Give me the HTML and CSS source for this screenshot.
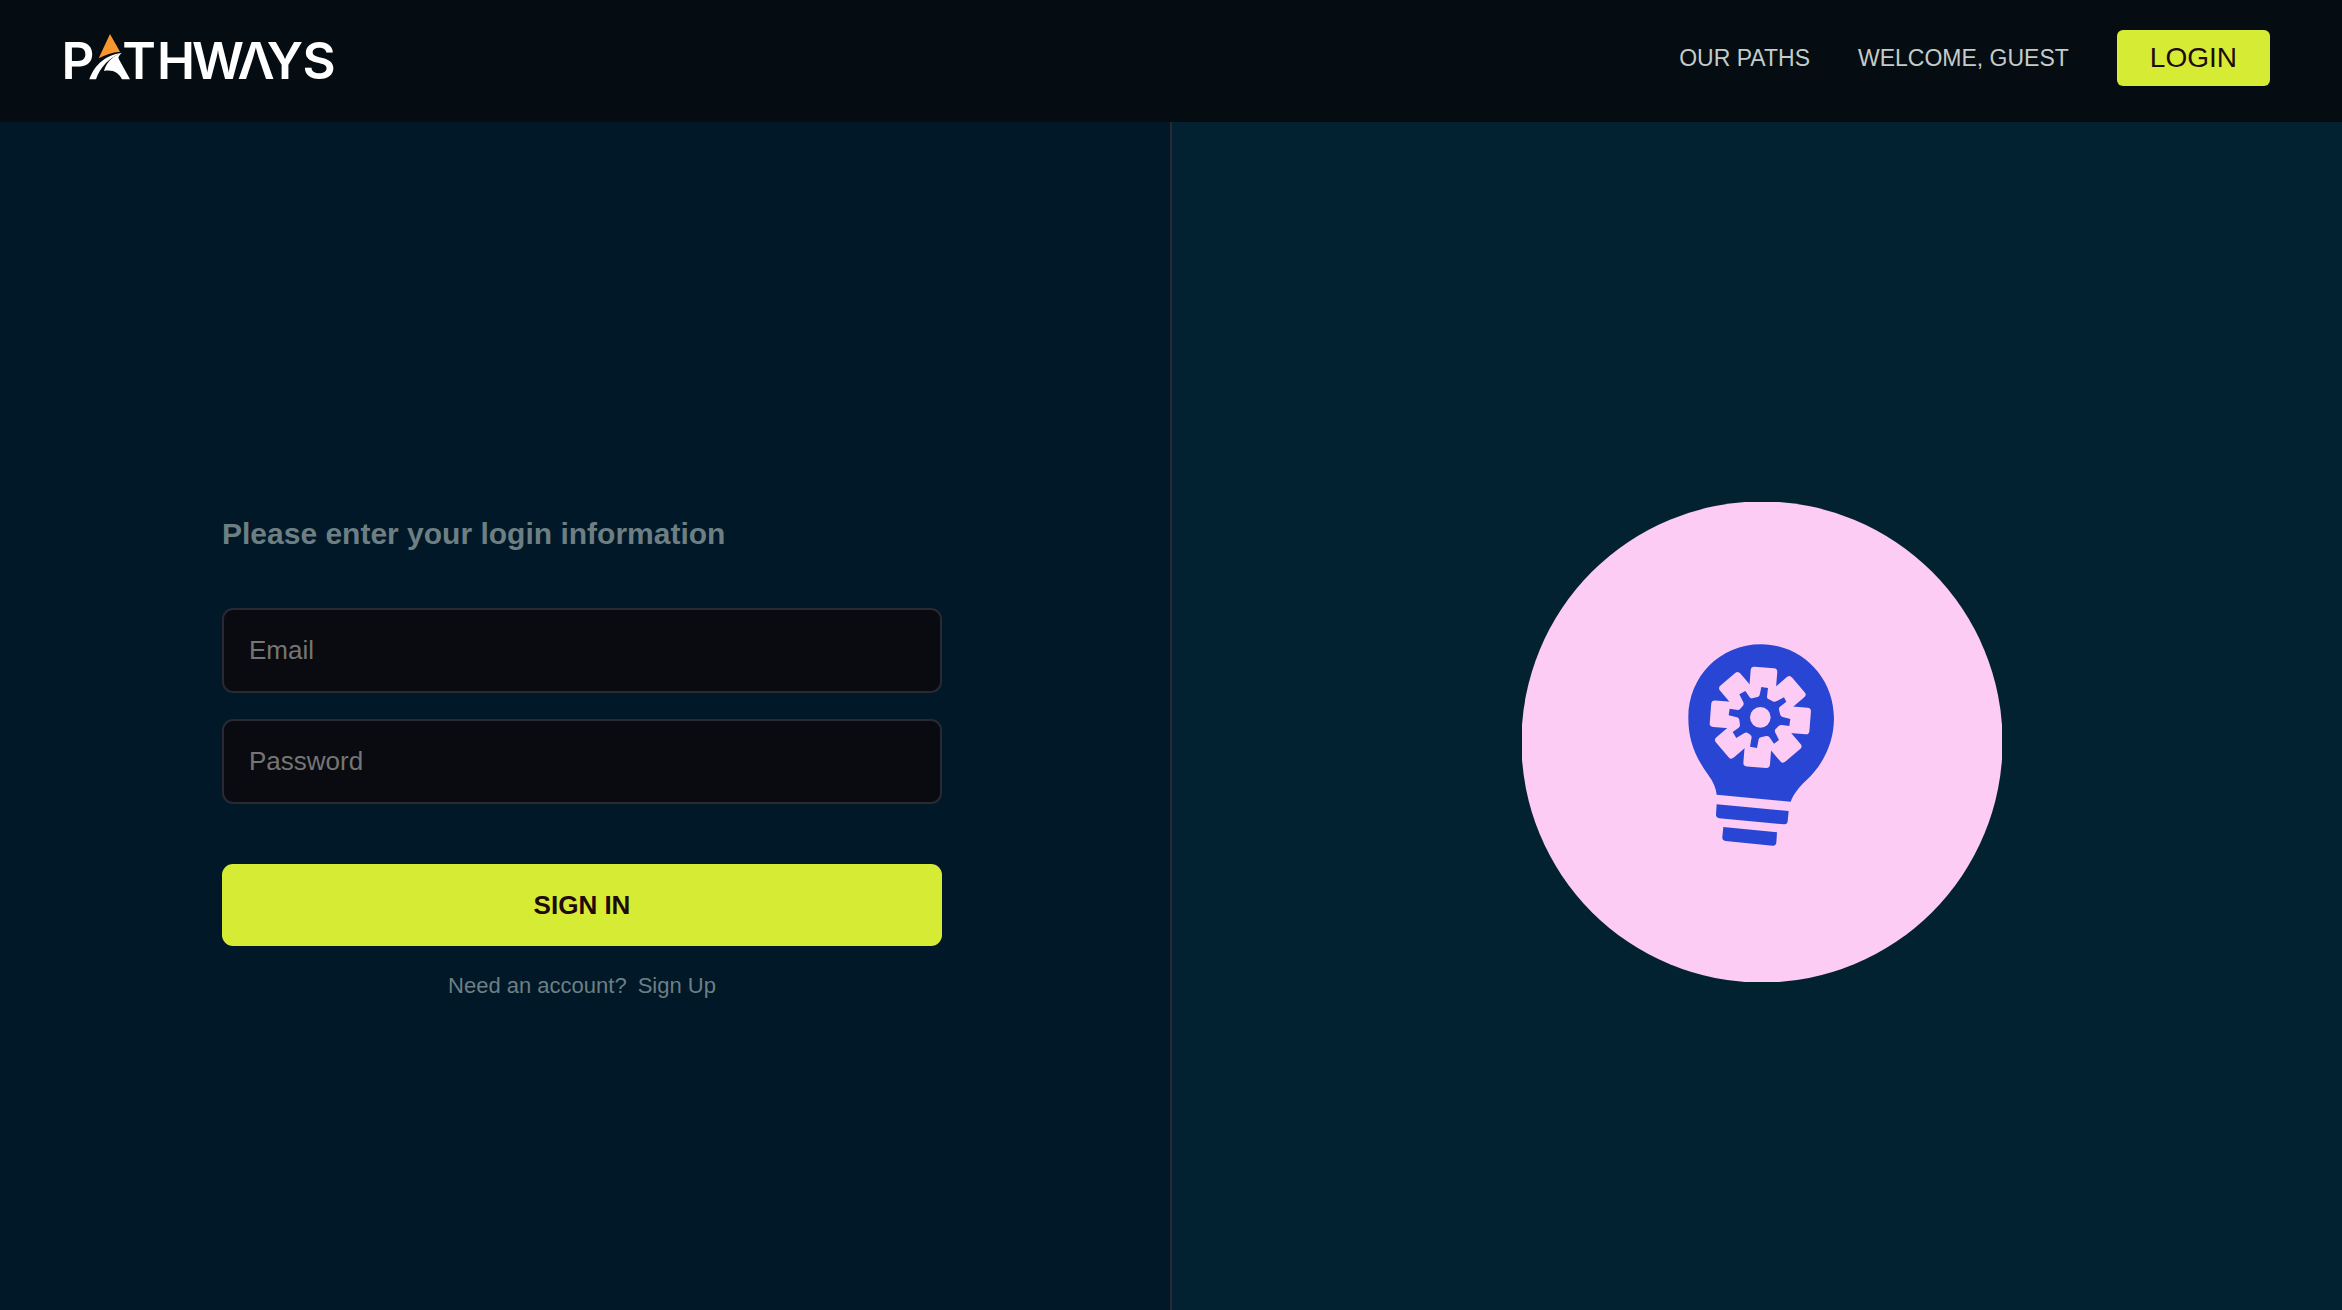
FILE: index.html
```html
<!DOCTYPE html>
<html lang="en">
<head>
<meta charset="utf-8">
<meta name="viewport" content="width=device-width, initial-scale=1">
<title>Pathways – Login</title>
<link rel="stylesheet" href="styles.css">
</head>
<body>
<header class="site-header">
  <a class="logo" href="#" aria-label="Pathways home">
    <svg class="logo-art" viewBox="0 0 280 50" aria-hidden="true">
      <g transform="translate(-12 -10) scale(.3333)">
        <path fill="#f7972f" d="M180 42 L210 95 Q175 98 146 115 Z"/>
        <path fill="#fff" d="M118 178 C132 140 158 108 215 98 C178 112 150 142 138 178 Z"/>
        <path fill="#fff" d="M162 153 C168 130 184 110 215 98 C207 106 204 112 206 116 L240 178 L216 178 C206 158 188 148 162 153 Z"/>
      </g>
      <g class="logo-text">
        <text x="16" y="49">P</text>
        <text x="77 114 156 194 223 257" y="49">THWΛYS</text>
      </g>
    </svg>
  </a>
  <nav class="site-nav">
    <a class="nav-link" href="#">OUR PATHS</a>
    <a class="nav-link" href="#">WELCOME, GUEST</a>
    <button class="login-button" type="button">LOGIN</button>
  </nav>
</header>
<main class="split">
  <section class="panel panel-form">
    <form class="login-form">
      <h1 class="form-title">Please enter your login information</h1>
      <div class="fields">
        <input class="field" type="email" placeholder="Email" aria-label="Email">
        <input class="field" type="password" placeholder="Password" aria-label="Password">
      </div>
      <button class="submit-button" type="submit">SIGN IN</button>
      <p class="signup-note"><span>Need an account?</span><a class="signup-link" href="#">Sign Up</a></p>
    </form>
  </section>
  <section class="panel panel-art">
    <svg class="idea-art" viewBox="0 0 480 480" role="img" aria-label="Light bulb with a gear">
      <circle cx="240" cy="240" r="240.6" fill="#fcccf4"/>
      <g transform="translate(138 118) scale(.3333)" fill="#2945d4">
        <path d="M303 73 C425 73 522 172 522 295 C522 370 488 435 440 480 C420 498 402 520 392 545 L170 524 C168 505 160 485 145 465 C105 410 85 360 85 293 C85 170 180 73 303 73Z"/>
        <path d="M170 553 L386 573 L383 604 Q382 614 372 613 L178 595 Q167 593 168 583Z"/>
        <path d="M190 621 L351 637 L349 668 Q347 678 338 677 L197 663 Q186 661 187 651Z"/>
        <g transform="translate(301 292) rotate(4.5)" fill="#fcccf4">
          <rect x="-40" y="-150" width="80" height="300" rx="11"/>
          <rect x="-40" y="-150" width="80" height="300" rx="11" transform="rotate(45)"/>
          <rect x="-40" y="-150" width="80" height="300" rx="11" transform="rotate(90)"/>
          <rect x="-40" y="-150" width="80" height="300" rx="11" transform="rotate(135)"/>
        </g>
        <path d="M304 201 L324 204 L321 230 Q321 235 325 237 L341 245 Q345 246 349 244 L372 232 L379 245 L360 260 Q356 264 357 269 L361 285 Q363 290 368 291 L391 297 L388 318 L366 315 Q360 314 356 318 L346 328 Q344 331 345 336 L357 360 L342 371 L328 351 Q324 347 319 348 L302 352 Q297 353 296 358 L291 384 L270 380 L275 352 Q275 347 271 344 L262 338 Q257 336 252 340 L229 354 L218 336 L236 323 Q240 320 240 316 L238 299 Q236 293 231 292 L206 286 L209 266 L233 270 Q238 270 241 266 L250 256 Q252 251 250 247 L238 223 L256 213 L269 232 Q272 236 277 235 L293 231 Q298 230 299 225Z"/>
        <circle cx="301" cy="292" r="31" fill="#fcccf4"/>
      </g>
    </svg>
  </section>
</main>
</body>
</html>
```
FILE: styles.css
```css
* {
  box-sizing: border-box;
}

body {
  margin: 0;
  min-height: 100vh;
  display: flex;
  flex-direction: column;
  background: #001828;
  font-family: "Liberation Sans", Arial, sans-serif;
}

.site-header {
  display: flex;
  justify-content: space-between;
  align-items: flex-start;
  padding: 30px 72px 36px 62px;
  background: #050c12;
}

.logo {
  display: block;
}

.logo-art {
  display: block;
  width: 280px;
  height: 50px;
  overflow: visible;
}

.logo-text {
  fill: #fff;
  font-family: Inter, sans-serif;
  font-size: 51px;
  font-weight: 600;
  text-anchor: middle;
}

.site-nav {
  display: flex;
  align-items: center;
  gap: 48px;
}

.nav-link {
  color: #c3ccc9;
  font-size: 23px;
  text-decoration: none;
}

.login-button {
  height: 56px;
  padding: 0 33px;
  border: 0;
  border-radius: 6px;
  background: #d6ec34;
  color: #200a0c;
  font: 28px "Liberation Sans", Arial, sans-serif;
}

.split {
  flex: 1;
  display: grid;
  grid-template-columns: 1fr 1fr;
  gap: 2px;
  background: #2a2833;
}

.panel {
  display: flex;
  justify-content: center;
  align-items: center;
}

.panel-form {
  padding: 83px 6px 0 0;
  background: #001828;
}

.panel-art {
  padding: 52px 0 0 10px;
  background: #022232;
}

.login-form {
  width: 720px;
}

.form-title {
  margin: 0 0 56px;
  color: #6d7f83;
  font-size: 30px;
  line-height: 36px;
}

.fields {
  display: grid;
  gap: 26px;
  margin-bottom: 60px;
}

.field {
  width: 100%;
  height: 85px;
  padding: 0 25px;
  border: 2px solid #2a2833;
  border-radius: 11px;
  background: #0a0b10;
  color: #d3dcd8;
  font: 26px "Liberation Sans", Arial, sans-serif;
}

.field::placeholder {
  color: #757575;
  opacity: 1;
}

.submit-button {
  display: block;
  width: 100%;
  height: 82px;
  border: 0;
  border-radius: 11px;
  background: #d6ec34;
  color: #200a0c;
  font: bold 26px "Liberation Sans", Arial, sans-serif;
}

.signup-note {
  display: flex;
  justify-content: center;
  gap: 11px;
  margin: 27px 0 0;
  color: #6d7f83;
  font-size: 22px;
  line-height: 26px;
}

.signup-link {
  color: inherit;
  text-decoration: none;
}

.idea-art {
  display: block;
  width: 480px;
  height: 480px;
}
```
